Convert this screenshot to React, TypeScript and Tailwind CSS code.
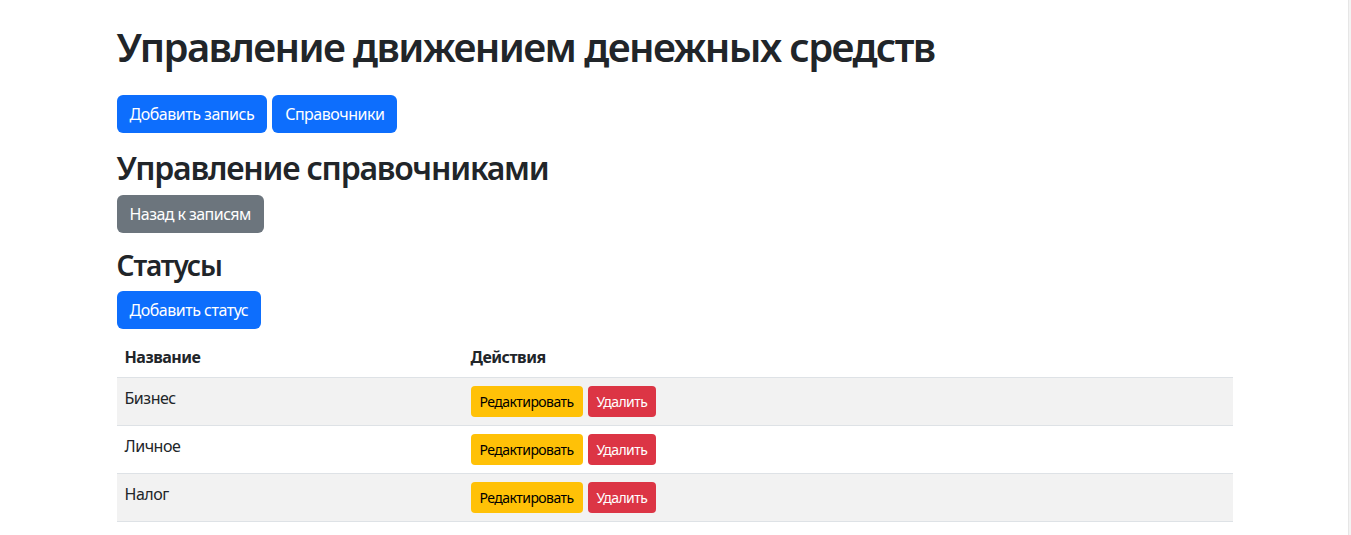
const rows = ["Бизнес", "Личное", "Налог"];

const btn = "inline-block rounded-[6px] border border-transparent px-3 py-[6px] text-base leading-6 text-white";
const btnSm = "inline-block rounded-[4px] border border-transparent px-2 py-1 text-sm leading-[21px] tracking-[-0.04em]";

export default function App() {
  return (
    <div className="flex min-h-[535px] bg-white text-[#212529] tracking-[-0.03em]" style={{ fontFamily: '"Noto Sans", "Open Sans", sans-serif' }}>
      <div className="flex-1 pl-[1px]">
        <div className="mx-auto w-[1140px] px-3 pt-[23px]">
          <h1 className="mb-6 text-[40px] font-semibold leading-[48px] tracking-[-0.04em]">Управление движением денежных средств</h1>
          <div className="mb-4 flex gap-[5px]">
            <button className={`${btn} bg-[#0d6efd]`}>Добавить запись</button>
            <button className={`${btn} bg-[#0d6efd]`}>Справочники</button>
          </div>

          <h2 className="mb-2 text-[32px] font-semibold leading-[38.4px] tracking-[-0.038em]">Управление справочниками</h2>
          <button className={`${btn} bg-[#6c757d] tracking-[-0.035em]`}>Назад к записям</button>

          <h3 className="mt-4 mb-2 text-[28px] font-semibold leading-[33.6px] tracking-[-0.04em]">Статусы</h3>
          <button className={`${btn} bg-[#0d6efd]`}>Добавить статус</button>

          <table className="mt-2 w-full border-collapse text-left text-base leading-6">
            <thead>
              <tr className="border-b border-[#dee2e6]">
                <th className="w-[346px] p-2 font-bold">Название</th>
                <th className="p-2 font-bold">Действия</th>
              </tr>
            </thead>
            <tbody>
              {rows.map((name, i) => (
                <tr key={name} className={`border-b border-[#dee2e6] ${i % 2 === 0 ? "bg-[#f2f2f2]" : "bg-white"}`}>
                  <td className="p-2 align-top">{name}</td>
                  <td className="p-2 align-top">
                    <div className="flex gap-[5px]">
                      <button className={`${btnSm} bg-[#ffc107] text-black`}>Редактировать</button>
                      <button className={`${btnSm} bg-[#dc3545] text-white`}>Удалить</button>
                    </div>
                  </td>
                </tr>
              ))}
            </tbody>
          </table>
        </div>
      </div>
      <div className="w-[3px] border-l border-[#e6e6e6] bg-[#f3f3f3]" />
    </div>
  );
}
